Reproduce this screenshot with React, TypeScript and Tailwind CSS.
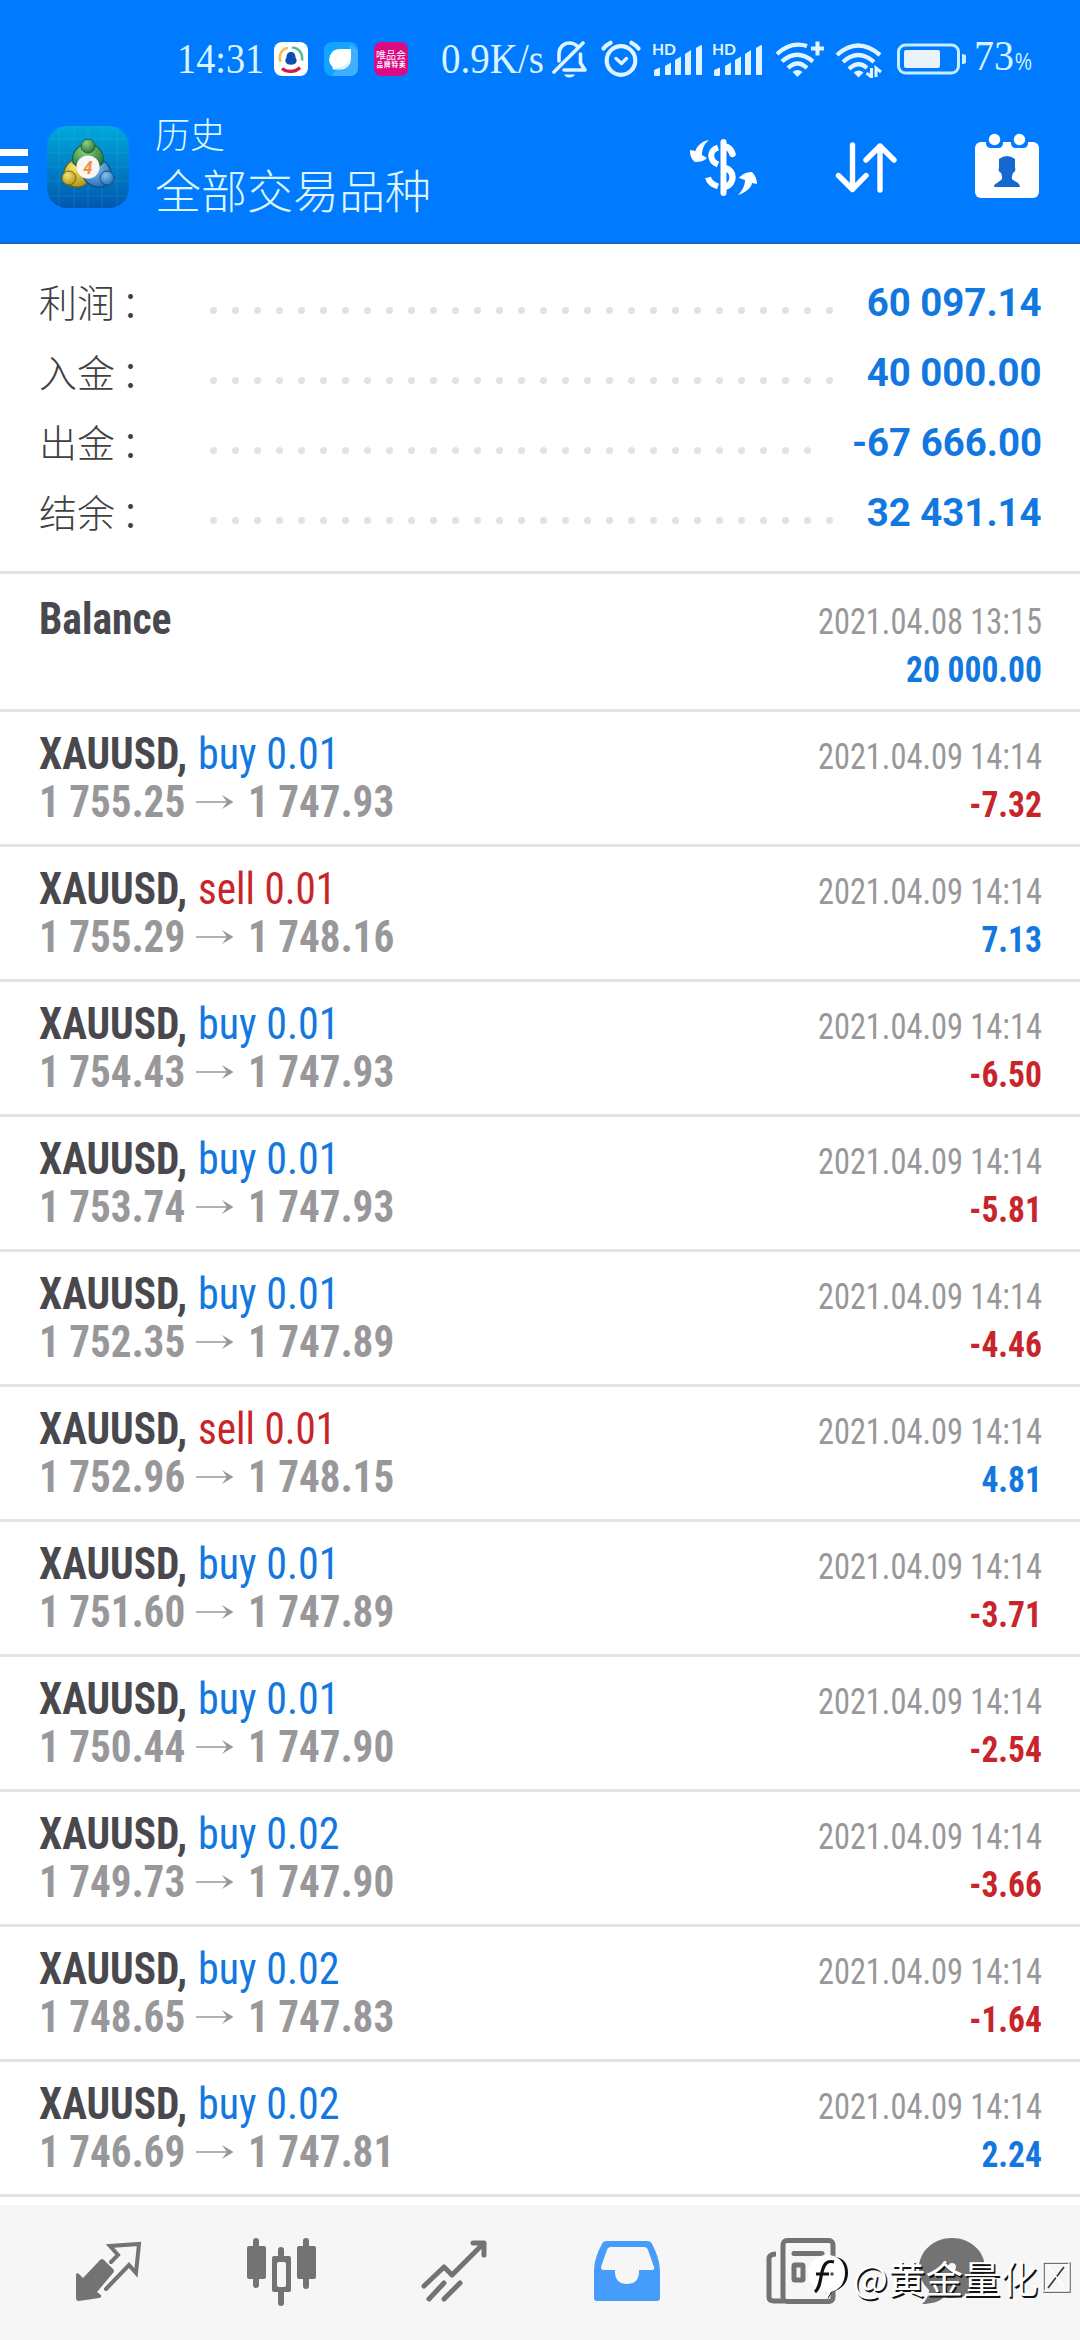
type Deal = {
  side: "buy" | "sell";
  volume: string;
  open: string;
  close: string;
  profit: string;
};

const SUMMARY = [
  { label: "利润", value: "60 097.14", dots: 29 },
  { label: "入金", value: "40 000.00", dots: 29 },
  { label: "出金", value: "-67 666.00", dots: 28 },
  { label: "结余", value: "32 431.14", dots: 29 },
];

const DEALS: Deal[] = [
  { side: "buy", volume: "0.01", open: "1 755.25", close: "1 747.93", profit: "-7.32" },
  { side: "sell", volume: "0.01", open: "1 755.29", close: "1 748.16", profit: "7.13" },
  { side: "buy", volume: "0.01", open: "1 754.43", close: "1 747.93", profit: "-6.50" },
  { side: "buy", volume: "0.01", open: "1 753.74", close: "1 747.93", profit: "-5.81" },
  { side: "buy", volume: "0.01", open: "1 752.35", close: "1 747.89", profit: "-4.46" },
  { side: "sell", volume: "0.01", open: "1 752.96", close: "1 748.15", profit: "4.81" },
  { side: "buy", volume: "0.01", open: "1 751.60", close: "1 747.89", profit: "-3.71" },
  { side: "buy", volume: "0.01", open: "1 750.44", close: "1 747.90", profit: "-2.54" },
  { side: "buy", volume: "0.02", open: "1 749.73", close: "1 747.90", profit: "-3.66" },
  { side: "buy", volume: "0.02", open: "1 748.65", close: "1 747.83", profit: "-1.64" },
  { side: "buy", volume: "0.02", open: "1 746.69", close: "1 747.81", profit: "2.24" },
];

function SignalIcon() {
  return (
    <svg width="50" height="50" viewBox="0 -8 50 50" fill="#dff4ff">
      <text x="-1" y="12.500" fontSize="15.5" fontWeight="700" textLength="24" lengthAdjust="spacingAndGlyphs" fontFamily="Lato, sans-serif">
        HD
      </text>
      <path d="M1 29 q0-1 1-1.500l5-2v7.500q0 1-1 1H2q-1 0-1-1z" />
      <path d="M12 24 l6-3.500V32q0 1-1 1h-4q-1 0-1-1z" />
      <path d="M22 18 l6-3.500V32q0 1-1 1h-4q-1 0-1-1z" />
      <path d="M32 12 l6-4V32q0 1-1 1h-4q-1 0-1-1z" />
      <path d="M43 6 l5-3q1 0 1 1V32q0 1-1 1h-4q-1 0-1-1z" />
    </svg>
  );
}

function StatusBar() {
  return (
    <div className="flex h-[118px] items-center font-['Liberation_Serif',serif] text-[43px] leading-[48px] whitespace-nowrap text-[#d9f3ff] [font-stretch:100%]">
      <span className="ml-[177px] w-[97px] origin-left scale-x-[0.89]">14:31</span>
      <svg width="34" height="34" viewBox="0 0 34 34" fill="none">
        <rect width="34" height="34" rx="8" fill="#fff" />
        <path d="M6.500 20C4 13 8 6.500 14 6" stroke="#f2c24b" strokeWidth="2.600" />
        <path d="M18 5.500c7 .5 11 6 10 13" stroke="#4fbf95" strokeWidth="2.600" />
        <path d="M8 26.500c5 4 13 4 18-1" stroke="#cf1f3d" strokeWidth="3.200" />
        <path d="M17 10c3 0 4.500 2.200 4.500 5.500 1.500 2 1.500 4 .5 5-1 3-9 3-10 0-1-1-1-3 .5-5C12.500 12.200 14 10 17 10z" fill="#0d4fae" />
      </svg>
      <svg className="ml-4" width="34" height="34" viewBox="0 0 34 34">
        <rect width="34" height="34" rx="8" fill="#12a4ff" />
        <path d="M26 2l8 6v18c0 5-3 8-8 8H8l18-26z" fill="#3fb0ff" />
        <path d="M17 7h10v10A10.500 10.500 0 0 1 17 27.500H9L8.500 25A10.500 10.500 0 0 1 17 7z" fill="#fff" />
        <path d="M27 11c2 8-6 16-17 15 9 4 19-4 17-15z" fill="#cfe6fa" />
      </svg>
      <svg className="ml-4" width="34" height="34" viewBox="0 0 34 34" fill="#fff" fontFamily="Noto Sans CJK SC, sans-serif">
        <rect width="34" height="34" rx="7" fill="#dc0a82" />
        <text x="2" y="16.500" fontSize="10" textLength="30">唯品会</text>
        <text x="2.500" y="25" fontSize="6.500" fontWeight="700" textLength="29">品牌特卖</text>
      </svg>
      <span className="ml-[33px] w-[111px] origin-left scale-x-[0.907]">0.9K/s</span>
      <svg width="36" height="38" viewBox="0 0 36 38" fill="none" stroke="#dff4ff" strokeWidth="3.600" strokeLinecap="round" strokeLinejoin="round">
        <path d="M7 21V14C7 7 12 3 17.500 3c3 0 5.500 1 7.500 3M28.500 14v9l4.500 7H12" />
        <path d="M2 32L31 3" />
        <path d="M12 34.500h11c-1 2-3 3-5.500 3s-4.500-1-5.500-3z" fill="#dff4ff" stroke="none" />
      </svg>
      <svg className="ml-[13px]" width="40" height="38" viewBox="0 0 40 38" fill="none" stroke="#dff4ff" strokeWidth="4.200" strokeLinecap="round" strokeLinejoin="round">
        <circle cx="20" cy="20.500" r="14.300" />
        <path d="M2.500 8.500Q5 5 9.500 2.800M37.500 8.500Q35 5 30.500 2.800" />
        <path d="M15 18.500l5.500 5 5-5" strokeWidth="3.400" />
      </svg>
      <div className="ml-[12px] flex gap-[10px]">
        <SignalIcon />
        <SignalIcon />
      </div>
      <svg className="ml-[12px]" width="50" height="38" viewBox="0 0 50 38" fill="none" stroke="#dff4ff" strokeWidth="4.300">
        <path d="M2 14Q16 1 32 6M7 21.500Q22 8 38 21.500M13 28Q22.500 19 32 28" />
        <path d="M17.500 32q5-4 10 0l-5 5z" fill="#dff4ff" stroke="none" />
        <path d="M36 8.500h13M42.500 1.500v14" strokeWidth="4" />
      </svg>
      <svg className="ml-[10px]" width="48" height="38" viewBox="0 0 48 38" fill="none" stroke="#dff4ff" strokeWidth="4.300">
        <path d="M2 15Q23-4 45 15M8 22Q23 8 39 22M14 29Q23.500 20 32 28" />
        <path d="M18.500 32.500q5-4 10 0l-5 5z" fill="#dff4ff" stroke="none" />
        <path d="M36.500 28v9l-5-4M41 37v-9l5 4" strokeWidth="3" />
      </svg>
      <svg className="ml-[14px]" width="70" height="32" viewBox="0 0 70 32">
        <rect x="1.500" y="2" width="60" height="28" rx="7" fill="none" stroke="#c5efff" strokeWidth="3" />
        <rect x="7" y="7" width="36" height="18" rx="2" fill="#e9f3fc" />
        <path d="M65 11q4 0 4 2v6q0 2-4 2z" fill="#c5efff" />
      </svg>
      <div className="ml-[7px] flex items-baseline">
        <span className="w-[41px] origin-left scale-x-[0.93]">73</span>
        <span className="origin-left scale-x-[0.82] font-['Liberation_Sans',sans-serif] text-[23px]">%</span>
      </div>
    </div>
  );
}

function AppLogo() {
  return (
    <svg width="82" height="82" viewBox="0 0 82 82">
      <defs>
        <linearGradient id="tile" x1="0" y1="0" x2="0" y2="1">
          <stop offset="0" stopColor="#00a9dc" />
          <stop offset="1" stopColor="#0058ae" />
        </linearGradient>
        <radialGradient id="green" cx=".4" cy=".3" r=".8">
          <stop offset="0" stopColor="#8fd07c" />
          <stop offset="1" stopColor="#1f6b35" />
        </radialGradient>
        <radialGradient id="gold" cx=".4" cy=".3" r=".8">
          <stop offset="0" stopColor="#f5e36c" />
          <stop offset="1" stopColor="#a98c14" />
        </radialGradient>
        <radialGradient id="azure" cx=".4" cy=".3" r=".8">
          <stop offset="0" stopColor="#83c4ee" />
          <stop offset="1" stopColor="#1c66ae" />
        </radialGradient>
      </defs>
      <rect width="82" height="82" rx="20" fill="url(#tile)" />
      <path d="M12 0v82M27 0v82M41 0v82M55 0v82M70 0v82M0 13h82M0 27h82M0 41h82M0 55h82M0 70h82" stroke="#5fd0ff" strokeWidth="1" opacity=".16" />
      <path d="M30 33c-9 2-14 9-13 18 1 8 8 11 15 10 6-1 10-4 10-9z" fill="url(#gold)" stroke="#5f6413" strokeWidth="1.200" />
      <path d="M51 33c9 2 14 9 13 18-1 8-8 11-14 10-6-1-11-4-13-9z" fill="url(#azure)" stroke="#134c86" strokeWidth="1.200" />
      <path d="M26 37c-2-11 5-19 15-19s17 8 15 19l-6 5H32z" fill="url(#green)" stroke="#1b5f45" strokeWidth="1.200" />
      <circle cx="41" cy="20" r="7" fill="url(#green)" stroke="#1b5f45" />
      <circle cx="22" cy="52" r="7" fill="url(#gold)" stroke="#6d6a13" />
      <circle cx="60" cy="52" r="7" fill="url(#azure)" stroke="#134c86" />
      <circle cx="41" cy="41" r="11.500" fill="#f8f6f3" />
      <text x="41" y="47.500" fontSize="19" fontWeight="700" fontStyle="italic" fill="#f0904d" textAnchor="middle" fontFamily="Roboto, sans-serif">
        4
      </text>
    </svg>
  );
}

function Header() {
  return (
    <div className="flex h-[126px] items-start border-b-2 border-[#1769cc] text-white">
      <div className="mt-[31px] flex w-7 flex-col gap-[10px]">
        <div className="h-[7px] bg-white" />
        <div className="h-[7px] bg-white" />
        <div className="h-[7px] bg-white" />
      </div>
      <div className="mt-2 ml-[19px]">
        <AppLogo />
      </div>
      <div className="ml-[26px] flex flex-1 flex-col font-['Noto_Sans_CJK_SC',sans-serif] font-light text-[#dcf7ff]">
        <span className="mt-[-9px] h-[47px] text-[35px] leading-[48px]">历史</span>
        <span className="h-[64px] text-[46px] leading-[64px]">全部交易品种</span>
      </div>
      <svg className="mt-[20px]" width="68" height="58" viewBox="0 0 68 58" fill="none" stroke="#fff">
        <path d="M34.500 4v51" strokeWidth="6" strokeLinecap="round" />
        <path d="M29 9.500c-9 3-9 13 0 17M19 39.500c1 4 4 7 10 9" strokeWidth="6" />
        <path d="M36 8.500c4 .5 6 3 7.500 7.500M36 30c10 2 10 16 0 19" strokeWidth="6.500" strokeLinecap="round" />
        <path d="M20 2C14 3 8 7 6.500 13L1 12c0 5 1 9 5 12 5 0 9-1 12-4l-5-3C13 10 16 5 20 2z" fill="#fff" stroke="none" />
        <path d="M49 57c6-2 13-6 14-12l5 1c0-5-2-9-5-12-5 0-10 2-13 6l6 2c0 6-3 11-7 15z" fill="#fff" stroke="none" />
      </svg>
      <svg className="mt-[23px] ml-[78px]" width="62" height="54" viewBox="0 0 62 54" fill="none" stroke="#fff" strokeWidth="5.400" strokeLinecap="round" strokeLinejoin="round">
        <path d="M17.500 4v44M3.500 34.500l14 14L31 34.500" />
        <path d="M45 49V5M31 19L45 5l14 14" />
      </svg>
      <svg className="mt-[15px] mr-[41px] ml-[78px]" width="64" height="66" viewBox="0 0 64 66">
        <rect y="9" width="64" height="56" rx="6" fill="#fff" />
        <path d="M11 6h17v4q0 5-5 5h-7q-5 0-5-5zM36 6h17v4q0 5-5 5h-7q-5 0-5-5z" fill="#007aff" />
        <circle cx="19.500" cy="6.500" r="5.700" fill="#fff" />
        <circle cx="44.500" cy="6.500" r="5.700" fill="#fff" />
        <path d="M24 26q8-6 16 0v9c1 2 0 4-2 5-1 3-2 6 0 7l5 3q2 2 2 4H19q0-3 3-4l4-3c2-1 1-4 0-7-2-1-3-3-2-5z" fill="#1468cf" />
      </svg>
    </div>
  );
}

function Summary() {
  return (
    <div className="flex h-[330px] flex-col border-b-[3px] border-[#e4e4e4] pt-[24px]">
      {SUMMARY.map((s) => (
        <div key={s.label} className="flex h-[70px] items-center pr-[38px] pl-[39px]">
          <div className="flex w-[171px] gap-[6px] pb-[5px] font-['Noto_Sans_CJK_SC',sans-serif] text-[38px] leading-[64px] font-light text-[#404043]">
            <span>{s.label}</span>
            <span>：</span>
          </div>
          <div className="mt-[15px] flex flex-1 gap-[15px]">
            {Array.from({ length: s.dots }, (_, i) => (
              <span key={i} className="h-[7px] w-[7px] shrink-0 rounded-full bg-[#e2e2e2]" />
            ))}
          </div>
          <span className="origin-right scale-x-[0.985] font-['Roboto',sans-serif] text-[39px] leading-[70px] font-bold text-[#1278e0] [font-stretch:100%]">
            {s.value}
          </span>
        </div>
      ))}
    </div>
  );
}

function Arrow() {
  return (
    <svg className="absolute top-[12px] left-[157px]" width="38" height="24" viewBox="0 0 38 24">
      <path d="M0 12h34" stroke="#98989b" strokeWidth="1.600" />
      <path d="M26 5l11.500 7L26 19l5-7z" fill="#98989b" />
    </svg>
  );
}

function DealRow({ deal }: { deal: Deal }) {
  return (
    <div className="flex h-[135px] justify-between border-b-[3px] border-[#e4e4e4] pr-[38px] pl-[39px]">
      <div className="pt-[18px] text-[44px] leading-[48px] whitespace-nowrap">
        <div className="flex">
          <span className="w-[159px] origin-left scale-x-[0.94] font-bold text-[#49494d]">XAUUSD,</span>
          <span className={deal.side === "buy" ? "origin-left scale-x-[0.955] text-[#1278e0]" : "origin-left scale-x-[0.935] text-[#c8252b]"}>
            {deal.side} {deal.volume}
          </span>
        </div>
        <div className="relative flex font-bold text-[#98989b]">
          <span className="w-[209px] origin-left scale-x-[0.935]">{deal.open}</span>
          <Arrow />
          <span className="origin-left scale-x-[0.935]">{deal.close}</span>
        </div>
      </div>
      <div className="pt-[21px] text-right text-[36px] leading-[48px]">
        <div className="origin-right scale-x-90 text-[#98989b]">2021.04.09 14:14</div>
        <div
          className={
            deal.profit.startsWith("-")
              ? "origin-right scale-x-[0.93] font-bold text-[#c8252b]"
              : "origin-right scale-x-[0.93] font-bold text-[#1278e0]"
          }
        >
          {deal.profit}
        </div>
      </div>
    </div>
  );
}

function BottomNav() {
  return (
    <div className="flex h-[135px] items-start bg-[#f6f6f6] pt-[32px] pl-[74px] text-[#737373]">
      <svg className="mr-[103px]" width="70" height="70" viewBox="0 0 70 70">
        <path d="M2 38q0-3 3-1l4 4 17-18q2-2 4 0l9 9q2 2 0 4L23 55l4 3q1 3-2 3L5 64q-3 0-3-3z" fill="currentColor" />
        <path d="M37 25l7-7-8-9 29-2-3 29-7-8-23 24" fill="none" stroke="currentColor" strokeWidth="4" strokeLinecap="round" />
      </svg>
      <svg className="mr-[103px]" width="70" height="70" viewBox="0 0 70 70" fill="currentColor">
        <rect x="6" y="1" width="6" height="50" rx="3" />
        <rect x="0" y="9" width="19" height="33" rx="2" />
        <rect x="31" y="10" width="6" height="59" rx="3" />
        <rect x="25" y="19" width="19" height="36" rx="2" />
        <rect x="30" y="25" width="9" height="25" rx="2" fill="#f6f6f6" />
        <rect x="56" y="1" width="6" height="51" rx="3" />
        <rect x="50" y="9" width="19" height="33" rx="2" />
      </svg>
      <svg className="mr-[103px]" width="70" height="70" viewBox="0 0 70 70" fill="none" stroke="currentColor" strokeWidth="5" strokeLinecap="round" strokeLinejoin="round">
        <path d="M4 49l20-19 8 8L62 8" />
        <path d="M53 6h11v12" />
        <path d="M9 62l15-16M24 62l16-16" />
      </svg>
      <svg className="mr-[103px]" width="70" height="70" viewBox="0 0 70 70">
        <path d="M14 4h40q4 0 5 3c5 9 8 19 8 28v26q0 3-3 3H4q-3 0-3-3V35C1 25 4 16 9 7q1-3 5-3z" fill="#469cfb" />
        <path d="M18 10h33q3 0 4 3l6 17q1 3-2 3H46v3q-1 11-12 11T22 36v-3H11q-3 0-3-3l6-17q1-3 4-3z" fill="#f6f6f6" />
      </svg>
      <svg width="70" height="70" viewBox="0 0 70 70" fill="none" stroke="currentColor" strokeWidth="5">
        <rect x="17" y="3.500" width="50" height="61" rx="4" />
        <path d="M10 17q-7 0-7 5v38q0 4 5 4h10" />
        <path d="M28 16.500h28" strokeLinecap="round" />
        <rect x="28" y="28" width="9" height="15" rx="1" />
      </svg>
      <svg className="ml-[82px]" width="70" height="70" viewBox="0 0 70 70">
        <path d="M34 1c18 0 33 13 33 30S52 61 34 61c-3 0-6 0-8-1-5 5-13 7-22 7 4-3 7-9 7-14C5 47 1 40 1 31 1 14 16 1 34 1z" fill="currentColor" />
        <circle cx="34" cy="30" r="4" fill="#f6f6f6" />
      </svg>
    </div>
  );
}

function Watermark() {
  return (
    <div className="absolute right-[9px] bottom-[37px] flex items-center text-white">
      <svg className="mr-[2px]" width="44" height="50" viewBox="0 0 44 50">
        <path d="M26 5c10 0 15 6 15 16 0 11-8 17-16 19l-4 7-2-8" fill="#111" />
        <path d="M20 3c11 0 18 7 18 17 0 12-6 18-14 20l-4 7-1-8C9 39 1 31 1 21S9 3 20 3z" fill="#fff" />
        <path d="M27 10c-7-2-10 2-12 10-2 9-2 16-7 20M9 22h13" fill="none" stroke="#111" strokeWidth="3.200" />
        <circle cx="25" cy="22" r="1.800" fill="#555" />
      </svg>
      <span className="font-['Noto_Sans_CJK_SC',sans-serif] text-[37.5px] leading-[52px] whitespace-nowrap [text-shadow:1.5px_1.5px_0_#111]">
        @黄金量化
      </span>
      <svg className="ml-[4px]" width="29" height="34" viewBox="0 0 29 34" fill="none">
        <path d="M2 3h26v29H2z" stroke="#444" strokeWidth="1.300" />
        <path d="M22 7L6 28" stroke="#333" strokeWidth="1.600" />
        <path d="M1 2h26v29H1zM5 5l17 22" stroke="#fff" strokeWidth="1.300" />
      </svg>
    </div>
  );
}

export default function App() {
  return (
    <div className="relative flex h-[2340px] w-[1080px] flex-col overflow-hidden bg-white font-['Roboto_Condensed','Roboto',sans-serif] [font-stretch:75%]">
      <div className="bg-[#007aff]">
        <StatusBar />
        <Header />
      </div>
      <Summary />
      <div className="flex flex-1 flex-col">
        <div className="flex h-[138px] justify-between border-b-[3px] border-[#e4e4e4] pr-[38px] pl-[39px]">
          <span className="origin-left scale-x-[0.945] pt-[21px] text-[44px] leading-[48px] font-bold text-[#49494d]">Balance</span>
          <div className="pt-[24px] text-right text-[36px] leading-[48px]">
            <div className="origin-right scale-x-90 text-[#98989b]">2021.04.08 13:15</div>
            <div className="origin-right scale-x-[0.93] font-bold text-[#1278e0]">20 000.00</div>
          </div>
        </div>
        {DEALS.map((deal) => (
          <DealRow key={deal.open} deal={deal} />
        ))}
      </div>
      <BottomNav />
      <Watermark />
    </div>
  );
}
